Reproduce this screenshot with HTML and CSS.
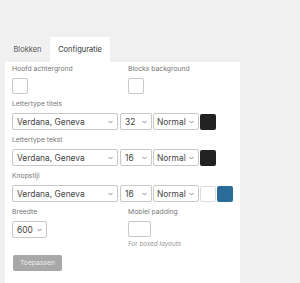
FILE: index.html
```html
<!DOCTYPE html>
<html>
<head>
<meta charset="utf-8">
<link rel="stylesheet" href="styles.css">
</head>
<body>
<div class="tabs">
  <div class="tab">Blokken</div>
  <div class="tab active">Configuratie</div>
</div>
<div class="panel">
  <div class="cols">
    <div class="group">
      <div class="label">Hoofd achtergrond</div>
      <div class="box"></div>
    </div>
    <div class="group">
      <div class="label">Blocks background</div>
      <div class="box"></div>
    </div>
  </div>
  <div class="group">
    <div class="label">Lettertype titels</div>
    <div class="row">
      <div class="select font">Verdana, Geneva<svg class="chev" viewBox="0 0 6 4"><path d="M0.5 0.7 L3 3.2 L5.5 0.7"/></svg></div>
      <div class="select size">32<svg class="chev" viewBox="0 0 6 4"><path d="M0.5 0.7 L3 3.2 L5.5 0.7"/></svg></div>
      <div class="select weight">Normal<svg class="chev" viewBox="0 0 6 4"><path d="M0.5 0.7 L3 3.2 L5.5 0.7"/></svg></div>
      <div class="swatch dark"></div>
    </div>
  </div>
  <div class="group">
    <div class="label">Lettertype tekst</div>
    <div class="row">
      <div class="select font">Verdana, Geneva<svg class="chev" viewBox="0 0 6 4"><path d="M0.5 0.7 L3 3.2 L5.5 0.7"/></svg></div>
      <div class="select size">16<svg class="chev" viewBox="0 0 6 4"><path d="M0.5 0.7 L3 3.2 L5.5 0.7"/></svg></div>
      <div class="select weight">Normal<svg class="chev" viewBox="0 0 6 4"><path d="M0.5 0.7 L3 3.2 L5.5 0.7"/></svg></div>
      <div class="swatch dark"></div>
    </div>
  </div>
  <div class="group spaced">
    <div class="label">Knopstijl</div>
    <div class="row">
      <div class="select font">Verdana, Geneva<svg class="chev" viewBox="0 0 6 4"><path d="M0.5 0.7 L3 3.2 L5.5 0.7"/></svg></div>
      <div class="select size">16<svg class="chev" viewBox="0 0 6 4"><path d="M0.5 0.7 L3 3.2 L5.5 0.7"/></svg></div>
      <div class="select weight">Normal<svg class="chev" viewBox="0 0 6 4"><path d="M0.5 0.7 L3 3.2 L5.5 0.7"/></svg></div>
      <div class="swatch light"></div>
      <div class="swatch blue"></div>
    </div>
  </div>
  <div class="cols">
    <div class="group">
      <div class="label">Breedte</div>
      <div class="select width">600<svg class="chev" viewBox="0 0 6 4"><path d="M0.5 0.7 L3 3.2 L5.5 0.7"/></svg></div>
    </div>
    <div class="group">
      <div class="label">Mobiel padding</div>
      <div class="box wide"></div>
      <div class="hint">For boxed layouts</div>
    </div>
  </div>
  <div class="button">Toepassen</div>
</div>
</body>
</html>
```

FILE: styles.css
```css
html, body {
  margin: 0;
  padding: 0;
  height: 100%;
}
body {
  background: #f0f0f0;
  font-family: "Inter", "Noto Sans", sans-serif;
  color: #555;
  display: flex;
  flex-direction: column;
}
.tabs {
  display: flex;
  padding: 37px 0 0 5px;
}
.tab {
  height: 25px;
  line-height: 25px;
  font-size: 7.5px;
  color: #555;
  text-align: center;
  width: 45px;
}
.tab.active {
  width: 60px;
  background: #fff;
  color: #333;
}
.panel {
  flex: 1;
  width: 221px;
  margin-left: 5px;
  background: #fff;
  padding: 2px 7px 0 7px;
}
.cols {
  display: grid;
  grid-template-columns: 116px 1fr;
}
.group {
  margin-bottom: 5px;
}
.group.spaced {
  margin-top: 1px;
}
.label {
  font-size: 6.8px;
  line-height: 10px;
  color: #777;
  margin-bottom: 4px;
}
.box {
  width: 14px;
  height: 14px;
  border: 1px solid #c8c8c8;
  border-radius: 2px;
}
.box.wide {
  width: 21px;
}
.row {
  display: flex;
  align-items: center;
}
.select {
  box-sizing: border-box;
  height: 17px;
  border: 1px solid #c8c8c8;
  border-radius: 2px;
  font-size: 8.4px;
  color: #444;
  display: flex;
  align-items: center;
  justify-content: space-between;
  padding: 0 4px 0 4px;
}
.chev {
  width: 5px;
  height: 4px;
  fill: none;
  stroke: #666;
  stroke-width: 0.9;
}
.select.font {
  width: 106px;
  margin-right: 2px;
}
.select.size {
  width: 32px;
  margin-right: 1px;
}
.select.weight {
  width: 46px;
  margin-right: 1px;
  padding-left: 3px;
}
.select.width {
  width: 35px;
  padding-left: 4px;
}
.swatch {
  box-sizing: border-box;
  width: 16px;
  height: 16px;
  border-radius: 2px;
}
.swatch.dark {
  background: #222;
}
.swatch.light {
  border: 1px solid #ddd;
  background: #fff;
  margin-right: 1px;
}
.swatch.blue {
  background: #2a6b99;
}
.hint {
  font-size: 6.3px;
  font-style: italic;
  color: #999;
  line-height: 10px;
  margin-top: 2px;
}
.button {
  margin-top: 1px;
  margin-left: 1px;
  width: 49px;
  height: 16px;
  line-height: 16px;
  border-radius: 2px;
  background: #a8a8a8;
  color: #eee;
  font-size: 6.8px;
  text-align: center;
}
```
